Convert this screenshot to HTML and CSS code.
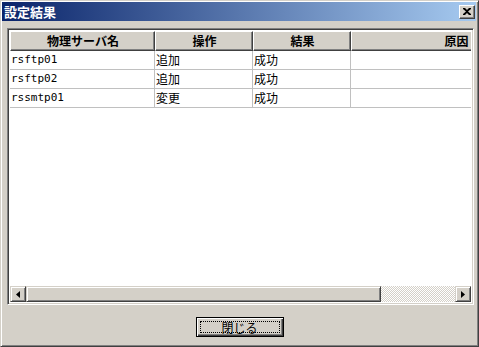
FILE: index.html
```html
<!DOCTYPE html>
<html lang="ja">
<head>
    <meta charset="UTF-8">
    <title>設定結果</title>
    <link rel="stylesheet" href="styles.css">
</head>
<body>
    <div class="window">
        <div class="titlebar">
            <span class="title">設定結果</span>
            <span class="close">
                <svg width="8" height="7" viewBox="0 0 8 7"><path d="M0 0h2l2 2 2-2h2v1L5 3.5 8 6v1H6L4 5 2 7H0V6l3-2.5L0 1z" fill="#000"/></svg>
            </span>
        </div>
        <div class="client">
            <div class="list">
                <div class="grid">
                    <div class="row head">
                        <div class="cell c1">物理サーバ名</div>
                        <div class="cell c2">操作</div>
                        <div class="cell c3">結果</div>
                        <div class="cell c4">原因</div>
                    </div>
                    <div class="row">
                        <div class="cell c1 mono">rsftp01</div>
                        <div class="cell c2">追加</div>
                        <div class="cell c3">成功</div>
                        <div class="cell c4"></div>
                    </div>
                    <div class="row">
                        <div class="cell c1 mono">rsftp02</div>
                        <div class="cell c2">追加</div>
                        <div class="cell c3">成功</div>
                        <div class="cell c4"></div>
                    </div>
                    <div class="row">
                        <div class="cell c1 mono">rssmtp01</div>
                        <div class="cell c2">変更</div>
                        <div class="cell c3">成功</div>
                        <div class="cell c4"></div>
                    </div>
                </div>
                <div class="hscroll">
                    <span class="arrow"><svg width="4" height="7" viewBox="0 0 4 7"><path d="M4 0v7L0 3.5z" fill="#000"/></svg></span>
                    <span class="thumb"></span>
                    <span class="track"></span>
                    <span class="arrow"><svg width="4" height="7" viewBox="0 0 4 7"><path d="M0 0v7l4-3.5z" fill="#000"/></svg></span>
                </div>
            </div>
            <div class="footer">
                <button class="btn"><span class="focus">閉じる</span></button>
            </div>
        </div>
    </div>
</body>
</html>
```

FILE: styles.css
```css
* {
    margin: 0;
    padding: 0;
    box-sizing: border-box;
}

body {
    width: 479px;
    height: 347px;
    overflow: hidden;
    font-family: "Noto Sans CJK JP", sans-serif;
    font-size: 12px;
    color: #000;
    background: #d4d0c8;
}

/* ウィンドウ枠 */
.window {
    width: 479px;
    height: 347px;
    display: flex;
    flex-direction: column;
    background: #d4d0c8;
    border: 1px solid;
    border-color: #d4d0c8 #404040 #404040 #d4d0c8;
    box-shadow: inset 1px 1px #fff, inset -1px -1px #808080;
    padding: 1px 2px 2px 1px;
}

.titlebar {
    height: 19px;
    display: flex;
    align-items: center;
    justify-content: space-between;
    padding: 0 1px 0 2px;
    background: linear-gradient(to right, #0a246a, #a6caf0);
}

.title {
    color: #fff;
    font-weight: bold;
    font-size: 13px;
    line-height: 18px;
}

.close {
    width: 16px;
    height: 14px;
    display: flex;
    align-items: center;
    justify-content: center;
    background: #d4d0c8;
    border: 1px solid;
    border-color: #fff #404040 #404040 #fff;
    box-shadow: inset -1px -1px #808080;
}

.client {
    flex: 1;
    display: flex;
    flex-direction: column;
    padding: 7px 2px 0 5px;
}

/* 一覧 */
.list {
    height: 277px;
    display: flex;
    flex-direction: column;
    background: #fff;
    border: 1px solid;
    border-color: #808080 #fff #fff #808080;
    box-shadow: inset 1px 1px #404040, inset -1px -1px #d4d0c8;
    padding: 2px;
}

.grid {
    flex: 1;
    overflow: hidden;
}

.row {
    display: flex;
    height: 19px;
    width: 560px;
    border-bottom: 1px solid #c0c0c0;
}

.cell {
    flex: none;
    height: 100%;
    line-height: 18px;
    padding-left: 1px;
    white-space: nowrap;
    border-right: 1px solid #c0c0c0;
}

.mono {
    font-family: "DejaVu Sans Mono", monospace;
    font-size: 11px;
}

.c1 { width: 145px; }
.c2 { width: 98px; }
.c3 { width: 98px; }
.c4 { width: 210px; }

.head {
    height: 20px;
    border-bottom: none;
}

.head .cell {
    text-align: center;
    font-weight: bold;
    background: #d4d0c8;
    line-height: 18px;
    border: 1px solid;
    border-color: #fff #404040 #404040 #fff;
    box-shadow: inset -1px -1px #808080;
}

/* スクロールバー */
.hscroll {
    height: 16px;
    display: flex;
}

.arrow {
    width: 16px;
    height: 16px;
    display: flex;
    align-items: center;
    justify-content: center;
    background: #d4d0c8;
    border: 1px solid;
    border-color: #d4d0c8 #404040 #404040 #d4d0c8;
    box-shadow: inset 1px 1px #fff, inset -1px -1px #808080;
}

.thumb {
    width: 355px;
    background: #d4d0c8;
    border: 1px solid;
    border-color: #d4d0c8 #404040 #404040 #d4d0c8;
    box-shadow: inset 1px 1px #fff, inset -1px -1px #808080;
}

.track {
    flex: 1;
    background: repeating-conic-gradient(#fff 0 25%, #d4d0c8 0 50%) 0 0 / 2px 2px;
}

/* ボタン */
.footer {
    display: flex;
    justify-content: center;
    padding-top: 12px;
    padding-right: 2px;
}

.btn {
    width: 88px;
    height: 20px;
    font-family: inherit;
    font-size: 12px;
    background: #d4d0c8;
    border: 1px solid #000;
    box-shadow: inset 1px 1px #fff, inset -1px -1px #404040, inset -2px -2px #808080;
    padding: 3px;
    display: flex;
}

.focus {
    flex: 1;
    line-height: 12px;
    border: 1px dotted #000;
    text-align: center;
}
```
